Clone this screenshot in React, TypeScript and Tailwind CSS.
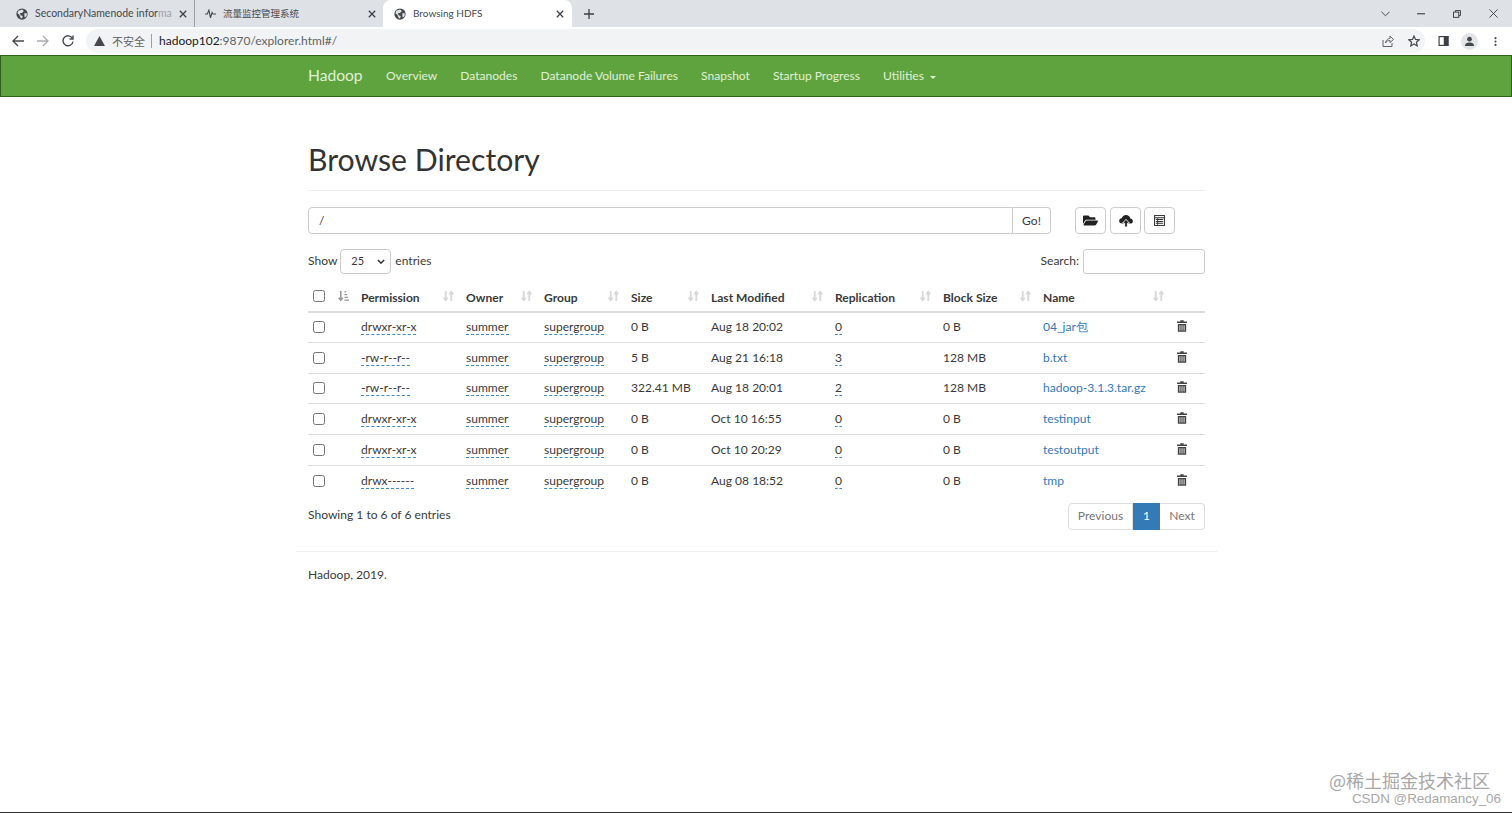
import { FaFolderOpen } from "react-icons/fa";

const navItems = ["Overview", "Datanodes", "Datanode Volume Failures", "Snapshot", "Startup Progress"];

const rows = [
  ["drwxr-xr-x", "0 B", "Aug 18 20:02", "0", "0 B", "04_jar包"],
  ["-rw-r--r--", "5 B", "Aug 21 16:18", "3", "128 MB", "b.txt"],
  ["-rw-r--r--", "322.41 MB", "Aug 18 20:01", "2", "128 MB", "hadoop-3.1.3.tar.gz"],
  ["drwxr-xr-x", "0 B", "Oct 10 16:55", "0", "0 B", "testinput"],
  ["drwxr-xr-x", "0 B", "Oct 10 20:29", "0", "0 B", "testoutput"],
  ["drwx------", "0 B", "Aug 08 18:52", "0", "0 B", "tmp"],
];

const columns = [
  ["Permission", "w-[105px]"],
  ["Owner", "w-[78px]"],
  ["Group", "w-[87px]"],
  ["Size", "w-[80px]"],
  ["Last Modified", "w-[124px]"],
  ["Replication", "w-[108px]"],
  ["Block Size", "w-[100px]"],
  ["Name", "w-[133px]"],
];

function Globe() {
  return (
    <svg viewBox="0 0 16 16" className="w-[12px] h-[12px] shrink-0">
      <circle cx="8" cy="8" r="7.5" fill="#45494e" />
      <path d="M3 3.5 L8 2 L10.5 4 L8 6.5 L5.5 6.5 L6 9.5 L9 10.5 L8 14 L6 13 L4.5 9 L2 7 Z" fill="#dee1e6" />
      <path d="M11 7 L14.5 7 L14 11 L11.5 12.5 Z" fill="#dee1e6" />
    </svg>
  );
}

function Close() {
  return (
    <svg viewBox="0 0 10 10" className="w-[8px] h-[8px] shrink-0" stroke="#3c4043" strokeWidth="1.6">
      <path d="M1 1 L9 9 M9 1 L1 9" />
    </svg>
  );
}

function SortIcon() {
  return (
    <svg viewBox="0 0 12 12" className="w-[11px] h-[12px]" stroke="#d8d8d8" strokeWidth="2" fill="none">
      <path d="M3 0.5 V10.5 M0.8 8 L3 10.5 L5.2 8" />
      <path d="M9 11.5 V1.5 M6.8 4 L9 1.5 L11.2 4" />
    </svg>
  );
}

function SortedIcon() {
  return (
    <svg viewBox="0 0 12 12" className="w-[11px] h-[12px]" stroke="#999" strokeWidth="1.8" fill="none">
      <path d="M3 0.5 V10.5 M0.8 8 L3 10.5 L5.2 8" />
      <path d="M7 1.5 H9 M7 4.5 H10 M7 7.5 H11 M7 10.5 H12" strokeWidth="1.5" />
    </svg>
  );
}

function TrashIcon() {
  return (
    <svg viewBox="0 0 12 14" className="w-[10px] h-[12px] -mt-[2px]" fill="#444">
      <path d="M4 0 H8 V1.5 H12 V3.5 H0 V1.5 H4 Z" />
      <path d="M1 4.5 H11 V14 H1 Z M3 6 V12.5 H4 V6 Z M5.5 6 V12.5 H6.5 V6 Z M8 6 V12.5 H9 V6 Z" fillRule="evenodd" />
    </svg>
  );
}

function CloudUploadIcon() {
  return (
    <svg viewBox="0 0 16 14" className="w-[14px] h-[12px]">
      <path d="M3.5 10 C1 10 0 8.4 0 6.8 C0 5 1.4 3.8 3 3.8 C3.6 1.6 5.6 0 8 0 C10.6 0 12.6 1.8 13 4 C14.8 4.2 16 5.4 16 7.2 C16 8.8 14.8 10 13 10 Z" fill="#222" />
      <path d="M8 5 L12 9.5 H9.6 V14 H6.4 V9.5 H4 Z" fill="#222" stroke="#fff" strokeWidth="1" />
    </svg>
  );
}

function ListAltIcon() {
  return (
    <svg viewBox="0 0 12 12" className="w-[11px] h-[11px]" fill="none" stroke="#333" strokeWidth="1.1">
      <rect x="0.6" y="0.6" width="10.8" height="10.8" />
      <path d="M0.6 3 H11.4 M2 5 H10 M2 7 H10 M2 9 H10" />
      <path d="M4 3.5 V10.5" />
    </svg>
  );
}

function Checkbox() {
  return <input type="checkbox" className="block w-[12px] h-[12px] m-0 accent-white" />;
}

function Editable({ children }: { children: string }) {
  return <span className="border-b border-dashed border-[#428bca] leading-[15px] inline-block">{children}</span>;
}

function BrowserChrome() {
  return (
    <div className="shrink-0">
      <div className="h-[27px] bg-[#dee1e6] flex items-end pl-[8px] text-[10.5px] text-[#45494e]">
        <div className="w-[187px] h-[27px] flex items-center pl-[8px] pr-[7px] gap-[7px] border-r border-[#9aa0a6]">
          <Globe />
          <span className="flex-1 whitespace-nowrap">
            SecondaryNamenode infor<span className="text-[#9ea2a6]">ma</span>
          </span>
          <span className="mr-[4px]"><Close /></span>
        </div>
        <div className="w-[188px] h-[27px] flex items-center pl-[10px] pr-[7px] gap-[7px]">
          <svg viewBox="0 0 14 12" className="w-[11px] h-[10px] shrink-0" stroke="#45494e" strokeWidth="1.4" fill="none">
            <path d="M0 6 H3 L5 1 L7 11 L9 4 L10 6 H14" />
          </svg>
          <span className="flex-1 whitespace-nowrap text-[9.5px] font-['Noto_Sans_CJK_SC',sans-serif]">流量监控管理系统</span>
          <Close />
        </div>
        <div className="w-[189px] h-[27px] flex items-center pl-[11px] pr-[8px] gap-[7px] bg-white rounded-t-[8px]">
          <Globe />
          <span className="flex-1 whitespace-nowrap text-[10px]">Browsing HDFS</span>
          <Close />
        </div>
        <svg viewBox="0 0 10 10" className="w-[10px] h-[10px] ml-[12px] mb-[8px]" stroke="#3c4043" strokeWidth="1.3">
          <path d="M5 0 V10 M0 5 H10" />
        </svg>
        <div className="ml-auto h-[27px] flex items-center">
          <svg viewBox="0 0 10 6" className="w-[9px] h-[6px] mr-[27px]" stroke="#3c4043" fill="none"><path d="M0.5 0.5 L5 5 L9.5 0.5" /></svg>
          <svg viewBox="0 0 10 2" className="w-[8px] h-[2px] mr-[28px]" fill="#3c4043"><rect width="10" height="1.4" /></svg>
          <svg viewBox="0 0 10 10" className="w-[8px] h-[8px] mr-[28px]" stroke="#3c4043" fill="none" strokeWidth="1.2">
            <rect x="0.6" y="2.6" width="6.6" height="6.6" />
            <path d="M3 2.5 V0.7 H9.3 V7 H7.3" />
          </svg>
          <svg viewBox="0 0 10 10" className="w-[9px] h-[9px] mr-[14px]" stroke="#3c4043" strokeWidth="1"><path d="M0.5 0.5 L9.5 9.5 M9.5 0.5 L0.5 9.5" /></svg>
        </div>
      </div>
      <div className="h-[28px] bg-white flex items-center text-[#5f6368]">
        <svg viewBox="0 0 12 12" className="w-[12px] h-[12px] ml-[12px] shrink-0" stroke="#45494e" strokeWidth="1.4" fill="none"><path d="M12 6 H1 M6 1 L1 6 L6 11" /></svg>
        <svg viewBox="0 0 12 12" className="w-[12px] h-[12px] ml-[13px] shrink-0" stroke="#a8abaf" strokeWidth="1.4" fill="none"><path d="M0 6 H11 M6 1 L11 6 L6 11" /></svg>
        <svg viewBox="0 0 12 12" className="w-[12px] h-[12px] ml-[13px] shrink-0" stroke="#45494e" strokeWidth="1.4" fill="none">
          <path d="M10.5 3.5 A5 5 0 1 0 11 6.5" />
          <path d="M11 0.5 V4 H7.5" />
        </svg>
        <div className="ml-[12px] w-[1339px] h-[24px] rounded-full bg-[#f1f3f4] flex items-center pl-[8px] text-[12px]">
          <svg viewBox="0 0 12 11" className="w-[11px] h-[10px]" fill="#45494e"><path d="M6 0 L12 11 H0 Z" /></svg>
          <span className="ml-[7px] text-[11px] text-[#5f6368] font-['Noto_Sans_CJK_SC',sans-serif]">不安全</span>
          <span className="mx-[6px] w-px h-[14px] bg-[#9aa0a6]" />
          <span className="ml-[1px] text-[#202124]">hadoop102</span>
          <span className="text-[#5f6368]">:9870/explorer.html#/</span>
          <div className="ml-auto flex items-center gap-[14px] mr-[5px]">
            <svg viewBox="0 0 12 12" className="w-[12px] h-[12px]" stroke="#5f6368" fill="none">
              <path d="M1 5 V11.5 H10 V8" />
              <path d="M3.5 8 C4 4.5 6.5 3.5 8 3.5 V1 L11.5 4.5 L8 7.5 V5.5 C6 5.5 4.5 6 3.5 8 Z" />
            </svg>
            <svg viewBox="0 0 12 12" className="w-[12px] h-[12px]" stroke="#45494e" strokeWidth="1.2" fill="none">
              <path d="M6 1 L7.5 4.4 L11.2 4.8 L8.4 7.2 L9.2 10.9 L6 9 L2.8 10.9 L3.6 7.2 L0.8 4.8 L4.5 4.4 Z" />
            </svg>
          </div>
        </div>
        <svg viewBox="0 0 12 12" className="w-[11px] h-[10px] ml-[13px] shrink-0" fill="none" stroke="#3c4043" strokeWidth="1.4">
          <rect x="0.7" y="0.7" width="10.6" height="10.6" />
          <rect x="7" y="0.7" width="4.3" height="10.6" fill="#3c4043" />
        </svg>
        <div className="ml-[12px] w-[17px] h-[17px] rounded-full bg-[#e3e5e8] flex items-center justify-center shrink-0">
          <svg viewBox="0 0 12 12" className="w-[11px] h-[11px]" fill="#45494e">
            <circle cx="6" cy="3.5" r="2.6" />
            <path d="M1 11 C1 8 3.5 7 6 7 C8.5 7 11 8 11 11 Z" />
          </svg>
        </div>
        <svg viewBox="0 0 4 12" className="w-[3px] h-[11px] ml-[16px] shrink-0" fill="#45494e">
          <circle cx="2" cy="1.5" r="1.4" />
          <circle cx="2" cy="6" r="1.4" />
          <circle cx="2" cy="10.5" r="1.4" />
        </svg>
      </div>
    </div>
  );
}

export default function App() {
  return (
    <div className="relative h-[813px] overflow-hidden bg-white text-[12.05px] text-[#3a3a3a] font-['Lato',sans-serif] flex flex-col border-b border-[#333]">
      <BrowserChrome />

      {/* Navbar */}
      <div className="h-[42px] shrink-0 bg-[#5fa33e] border border-[#2f5f1e] flex items-center pl-[307px] text-[#e0f0d8]">
        <span className="text-[15.6px] w-[78px]">Hadoop</span>
        {navItems.map((item, i) => (
          <span key={item} className={i === 0 ? "" : "ml-[23px]"}>{item}</span>
        ))}
        <span className="ml-[23px] flex items-center gap-[6px]">
          Utilities
          <span className="border-x-[3px] border-x-transparent border-t-[3px] border-t-[#e0f0d8] mt-[2px]" />
        </span>
      </div>

      <div className="w-[921px] ml-[296px] px-[12px]">
        <h1 className="mt-[41px] text-[30.2px] leading-[42px] pb-[10px] border-b border-[#eee] font-normal text-[#333]">Browse Directory</h1>

        <div className="mt-[16px] flex items-center h-[27px]">
          <div className="w-[705px] h-[27px] border border-[#ccc] rounded-l-[4px] pl-[10px] pt-px flex items-center">/</div>
          <div className="w-[38px] h-[27px] border border-l-0 border-[#ccc] rounded-r-[4px] pt-px flex items-center justify-center">Go!</div>
          <div className="ml-[24px] w-[31px] h-[27px] border border-[#ccc] rounded-[4px] flex items-center justify-center text-[#222]"><FaFolderOpen size={15} /></div>
          <div className="ml-[4px] w-[31px] h-[27px] border border-[#ccc] rounded-[4px] flex items-center justify-center"><CloudUploadIcon /></div>
          <div className="ml-[3px] w-[31px] h-[27px] border border-[#ccc] rounded-[4px] flex items-center justify-center"><ListAltIcon /></div>
        </div>

        <div className="mt-[15px] flex items-center justify-between h-[25px]">
          <div className="flex items-center">
            Show
            <div className="ml-[3px] mr-[4px] w-[51px] h-[25px] border border-[#ccc] rounded-[4px] flex items-center justify-between pl-[10px] pr-[5px] text-[11px]">
              25
              <svg viewBox="0 0 10 6" className="w-[8px] h-[5px]" stroke="#333" strokeWidth="1.8" fill="none"><path d="M1 1 L5 5 L9 1" /></svg>
            </div>
            entries
          </div>
          <div className="flex items-center gap-[4px]">
            Search:
            <div className="w-[122px] h-[25px] border border-[#ccc] rounded-[3px]" />
          </div>
        </div>

        <table className="mt-[8px] w-full border-collapse table-fixed">
          <thead>
            <tr className="h-[29.5px] border-b-2 border-[#ddd]">
              <th className="w-[45px] p-0">
                <div className="flex items-center pl-[5px]">
                  <Checkbox />
                  <span className="ml-[13px]"><SortedIcon /></span>
                </div>
              </th>
              {columns.map(([label, width]) => (
                <th key={label} className={`${width} p-0 pl-[8px] font-bold text-left`}>
                  <div className="flex items-center justify-between pr-[4px] pt-[3px]">
                    {label}
                    <span className="-mt-[3px]"><SortIcon /></span>
                  </div>
                </th>
              ))}
              <th className="p-0" />
            </tr>
          </thead>
          <tbody>
            {rows.map((row, i) => (
              <tr key={i} className="h-[30.8px] border-b border-[#ddd] last:border-b-0">
                <td className="p-0 pl-[5px]"><Checkbox /></td>
                <td className="p-0 pl-[8px]"><Editable>{row[0]}</Editable></td>
                <td className="p-0 pl-[8px]"><Editable>summer</Editable></td>
                <td className="p-0 pl-[8px]"><Editable>supergroup</Editable></td>
                <td className="p-0 pl-[8px]">{row[1]}</td>
                <td className="p-0 pl-[8px]">{row[2]}</td>
                <td className="p-0 pl-[8px]"><Editable>{row[3]}</Editable></td>
                <td className="p-0 pl-[8px]">{row[4]}</td>
                <td className="p-0 pl-[8px] text-[#337ab7] whitespace-nowrap">{row[5]}</td>
                <td className="p-0 pl-[9px]"><TrashIcon /></td>
              </tr>
            ))}
          </tbody>
        </table>

        <div className="mt-[7px] flex items-start justify-between">
          <span className="mt-[3px]">Showing 1 to 6 of 6 entries</span>
          <div className="flex h-[27px]">
            <div className="w-[65px] border border-[#ddd] rounded-l-[4px] pb-px flex items-center justify-center text-[#777]">Previous</div>
            <div className="w-[27px] bg-[#337ab7] text-white pb-px flex items-center justify-center">1</div>
            <div className="w-[45px] border border-l-0 border-[#ddd] rounded-r-[4px] pb-px flex items-center justify-center text-[#777]">Next</div>
          </div>
        </div>
      </div>

      <div className="ml-[296px] w-[921px] mt-[21px] border-t border-[#eee] px-[12px] pt-[14px]">Hadoop, 2019.</div>

      {/* Watermark */}
      <div className="absolute right-[11px] bottom-[6px] text-right text-[#a8a8a8] font-['Liberation_Sans',sans-serif]">
        <div className="text-[18px] leading-[21px] mr-[11px] font-['Noto_Sans_CJK_SC',sans-serif]">@稀土掘金技术社区</div>
        <div className="text-[13.4px] leading-[15px]">CSDN @Redamancy_06</div>
      </div>
    </div>
  );
}
